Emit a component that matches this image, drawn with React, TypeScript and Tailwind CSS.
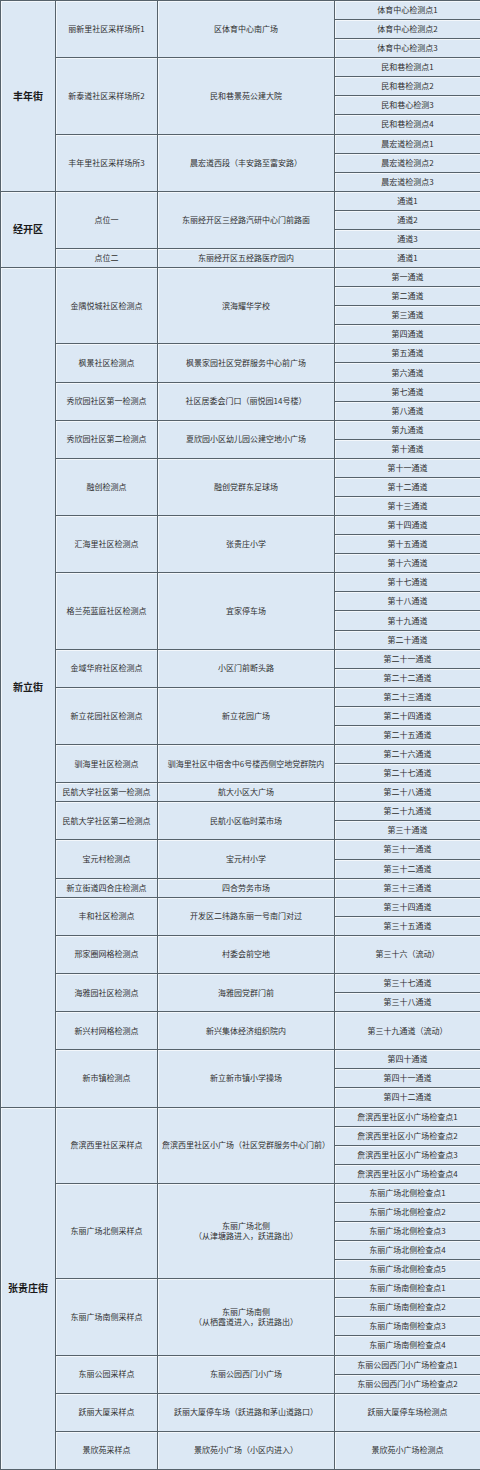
import React from "react";

type Ch = { t: string; s?: number };
type Site = { a: string; b: string[]; ch: Ch[] };
type Group = { name: string; sites: Site[] };

const c = (...names: string[]): Ch[] => names.map((t) => ({ t }));

const groups: Group[] = [
  {
    name: "丰年街",
    sites: [
      { a: "丽新里社区采样场所1", b: ["区体育中心南广场"], ch: c("体育中心检测点1", "体育中心检测点2", "体育中心检测点3") },
      { a: "新泰道社区采样场所2", b: ["民和巷景苑公建大院"], ch: c("民和巷检测点1", "民和巷检测点2", "民和巷心检测3", "民和巷检测点4") },
      { a: "丰年里社区采样场所3", b: ["晨宏道西段（丰安路至富安路）"], ch: c("晨宏道检测点1", "晨宏道检测点2", "晨宏道检测点3") },
    ],
  },
  {
    name: "经开区",
    sites: [
      { a: "点位一", b: ["东丽经开区三经路汽研中心门前路面"], ch: c("通道1", "通道2", "通道3") },
      { a: "点位二", b: ["东丽经开区五经路医疗园内"], ch: c("通道1") },
    ],
  },
  {
    name: "新立街",
    sites: [
      { a: "金隅悦城社区检测点", b: ["滨海耀华学校"], ch: c("第一通道", "第二通道", "第三通道", "第四通道") },
      { a: "枫景社区检测点", b: ["枫景家园社区党群服务中心前广场"], ch: c("第五通道", "第六通道") },
      { a: "秀欣园社区第一检测点", b: ["社区居委会门口（丽悦园14号楼）"], ch: c("第七通道", "第八通道") },
      { a: "秀欣园社区第二检测点", b: ["夏欣园小区幼儿园公建空地小广场"], ch: c("第九通道", "第十通道") },
      { a: "融创检测点", b: ["融创党群东足球场"], ch: c("第十一通道", "第十二通道", "第十三通道") },
      { a: "汇海里社区检测点", b: ["张贵庄小学"], ch: c("第十四通道", "第十五通道", "第十六通道") },
      { a: "格兰苑蓝庭社区检测点", b: ["宜家停车场"], ch: c("第十七通道", "第十八通道", "第十九通道", "第二十通道") },
      { a: "金域华府社区检测点", b: ["小区门前断头路"], ch: c("第二十一通道", "第二十二通道") },
      { a: "新立花园社区检测点", b: ["新立花园广场"], ch: c("第二十三通道", "第二十四通道", "第二十五通道") },
      { a: "驯海里社区检测点", b: ["驯海里社区中宿舍中6号楼西侧空地党群院内"], ch: c("第二十六通道", "第二十七通道") },
      { a: "民航大学社区第一检测点", b: ["航大小区大广场"], ch: c("第二十八通道") },
      { a: "民航大学社区第二检测点", b: ["民航小区临时菜市场"], ch: c("第二十九通道", "第三十通道") },
      { a: "宝元村检测点", b: ["宝元村小学"], ch: c("第三十一通道", "第三十二通道") },
      { a: "新立街道四合庄检测点", b: ["四合劳务市场"], ch: c("第三十三通道") },
      { a: "丰和社区检测点", b: ["开发区二纬路东丽一号南门对过"], ch: c("第三十四通道", "第三十五通道") },
      { a: "邢家圈网格检测点", b: ["村委会前空地"], ch: [{ t: "第三十六（流动）", s: 2 }] },
      { a: "海雅园社区检测点", b: ["海雅园党群门前"], ch: c("第三十七通道", "第三十八通道") },
      { a: "新兴村网格检测点", b: ["新兴集体经济组织院内"], ch: [{ t: "第三十九通道（流动）", s: 2 }] },
      { a: "新市镇检测点", b: ["新立新市镇小学操场"], ch: c("第四十通道", "第四十一通道", "第四十二通道") },
    ],
  },
  {
    name: "张贵庄街",
    sites: [
      {
        a: "詹滨西里社区采样点",
        b: ["詹滨西里社区小广场（社区党群服务中心门前）"],
        ch: c("詹滨西里社区小广场检查点1", "詹滨西里社区小广场检查点2", "詹滨西里社区小广场检查点3", "詹滨西里社区小广场检查点4"),
      },
      {
        a: "东丽广场北侧采样点",
        b: ["东丽广场北侧", "（从津塘路进入，跃进路出）"],
        ch: c("东丽广场北侧检查点1", "东丽广场北侧检查点2", "东丽广场北侧检查点3", "东丽广场北侧检查点4", "东丽广场北侧检查点5"),
      },
      {
        a: "东丽广场南侧采样点",
        b: ["东丽广场南侧", "（从栖霞道进入，跃进路出）"],
        ch: c("东丽广场南侧检查点1", "东丽广场南侧检查点2", "东丽广场南侧检查点3", "东丽广场南侧检查点4"),
      },
      { a: "东丽公园采样点", b: ["东丽公园西门小广场"], ch: c("东丽公园西门小广场检查点1", "东丽公园西门小广场检查点2") },
      { a: "跃丽大厦采样点", b: ["跃丽大厦停车场（跃进路和茅山道路口）"], ch: [{ t: "跃丽大厦停车场检测点", s: 2 }] },
      { a: "景欣苑采样点", b: ["景欣苑小广场（小区内进入）"], ch: [{ t: "景欣苑小广场检测点", s: 2 }] },
    ],
  },
];

const span: Record<number, string> = {
  1: "row-span-1",
  2: "row-span-2",
  3: "row-span-3",
  4: "row-span-4",
  5: "row-span-5",
  10: "row-span-10",
  19: "row-span-19",
  44: "row-span-44",
};

const siteRows = (s: Site) => s.ch.reduce((n, x) => n + (x.s ?? 1), 0);

const cell =
  "flex flex-col items-center justify-center text-center border-r border-b border-[#56626b] shadow-[inset_1px_1px_0_#f3f7fb] leading-[10px]";

export default function App() {
  const cells: React.ReactNode[] = [];
  groups.forEach((g, gi) => {
    const gRows = g.sites.reduce((n, s) => n + siteRows(s), 0);
    cells.push(
      <div
        key={`g${gi}`}
        className={`${cell} col-start-1 ${span[gRows]} text-[10px] font-semibold text-[#1a1a1a]`}
        style={{ fontFamily: '"Noto Sans CJK SC", "Liberation Serif", serif' }}
      >
        {g.name}
      </div>
    );
    g.sites.forEach((s, si) => {
      const r = siteRows(s);
      cells.push(
        <div key={`a${gi}-${si}`} className={`${cell} col-start-2 ${span[r]}`}>
          {s.a}
        </div>
      );
      cells.push(
        <div key={`b${gi}-${si}`} className={`${cell} col-start-3 ${span[r]}`}>
          {s.b.map((l, i) => (
            <span key={i} className="block whitespace-nowrap">
              {l}
            </span>
          ))}
        </div>
      );
      s.ch.forEach((ch, ci) => {
        cells.push(
          <div key={`c${gi}-${si}-${ci}`} className={`${cell} col-start-4 ${span[ch.s ?? 1]} whitespace-nowrap`}>
            {ch.t}
          </div>
        );
      });
    });
  });

  return (
    <div className="w-[480px] h-[1470px] bg-[#dce8f4] overflow-hidden">
      <div
        className="grid grid-cols-[55px_102px_177px_146px] grid-rows-[repeat(77,minmax(0,1fr))] h-[1470px] border-t border-l border-[#56626b] text-[8px] text-[#2f2f2f]"
        style={{ fontFamily: '"Noto Sans CJK SC", "Noto Sans", sans-serif' }}
      >
        {cells}
      </div>
    </div>
  );
}
